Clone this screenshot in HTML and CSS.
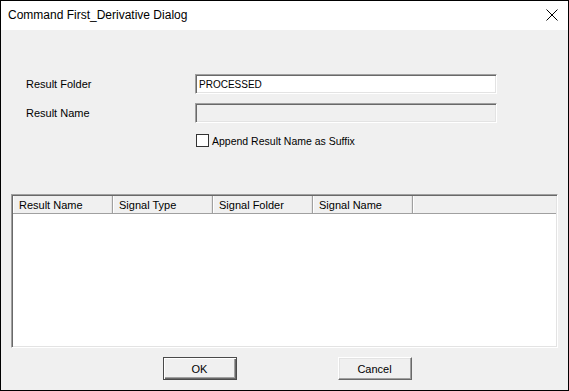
FILE: index.html
```html
<!DOCTYPE html>
<html lang="en">
<head>
  <meta charset="UTF-8" />
  <title>Command First_Derivative Dialog</title>
  <link rel="stylesheet" href="styles.css">
</head>
<body>
  <div class="window">
    <div class="titlebar">
      <span class="title">Command First_Derivative Dialog</span>
      <svg class="close" width="12" height="12" viewBox="0 0 12 12">
        <path d="M0.5 0.5 L11.5 11.5 M11.5 0.5 L0.5 11.5" stroke="#000" stroke-width="1" fill="none" />
      </svg>
    </div>
    <div class="content">
      <div class="form">
        <label>Result Folder</label>
        <div class="field">PROCESSED</div>
        <label>Result Name</label>
        <div class="field disabled"></div>
        <span></span>
        <div class="check"><span class="box"></span>Append Result Name as Suffix</div>
      </div>
      <div class="list">
        <div class="list-head">
          <div class="col">Result Name</div>
          <div class="col">Signal Type</div>
          <div class="col">Signal Folder</div>
          <div class="col">Signal Name</div>
          <div class="col rest"></div>
        </div>
        <div class="list-body"></div>
      </div>
      <div class="buttons">
        <button class="btn default">OK</button>
        <button class="btn">Cancel</button>
      </div>
    </div>
  </div>
</body>
</html>
```

FILE: styles.css
```css
body {
  margin: 0;
  font-family: 'Liberation Sans', Arial, sans-serif;
  font-size: 11px;
  color: #000;
}
.window {
  width: 569px;
  height: 391px;
  box-sizing: border-box;
  border: 1px solid #000;
  background: #f0f0f0;
  display: flex;
  flex-direction: column;
}
.titlebar {
  height: 29px;
  background: #fff;
  display: flex;
  align-items: center;
  justify-content: space-between;
  padding: 0 10px 0 7px;
}
.title {
  font-family: 'Liberation Sans', Arial, sans-serif;
  font-size: 12px;
  margin-top: -1px;
}
.close {
  display: block;
  margin-top: -1px;
}
.content {
  flex: 1;
  display: flex;
  flex-direction: column;
  padding: 44px 10px 0 10px;
}
.form {
  display: grid;
  grid-template-columns: 169px 302px;
  row-gap: 9px;
  padding-left: 15px;
  align-items: center;
}
.field {
  height: 20px;
  box-sizing: border-box;
  background: #fff;
  border: 1px solid;
  border-color: #a0a0a0 #ffffff #ffffff #a0a0a0;
  box-shadow: inset 1px 1px 0 #696969, inset -1px -1px 0 #e3e3e3;
  padding: 3px 3px 0 3px;
  font-size: 10px;
  line-height: 13px;
}
.field.disabled {
  background: #f0f0f0;
}
.check {
  display: flex;
  align-items: center;
  gap: 3px;
  margin-top: 2px;
  padding-left: 1px;
  font-size: 10.5px;
}
.box {
  width: 13px;
  height: 13px;
  box-sizing: border-box;
  background: #fff;
  border: 1px solid #333;
}
.list {
  margin-top: 47px;
  height: 154px;
  box-sizing: border-box;
  background: #fff;
  border: 1px solid;
  border-color: #a0a0a0 #ffffff #ffffff #a0a0a0;
  box-shadow: inset 1px 1px 0 #696969, inset -1px -1px 0 #e3e3e3;
  padding: 1px;
  display: flex;
  flex-direction: column;
}
.list-head {
  display: flex;
  height: 17px;
  background: #f0f0f0;
  border-bottom: 1px solid #a0a0a0;
}
.col {
  width: 100px;
  box-sizing: border-box;
  padding: 3px 0 0 5px;
  line-height: 12px;
  border-left: 1px solid #fff;
  border-right: 1px solid #a0a0a0;
  box-shadow: inset -1px 0 0 #e3e3e3;
}
.col.rest {
  flex: 1;
  border-right: none;
  box-shadow: none;
}
.list-body {
  flex: 1;
}
.buttons {
  display: flex;
  justify-content: center;
  gap: 101px;
  margin-top: 9px;
  padding-left: 5px;
}
.btn {
  width: 74px;
  height: 23px;
  box-sizing: border-box;
  font-family: 'Liberation Sans', Arial, sans-serif;
  font-size: 11px;
  background: #f0f0f0;
  border: 1px solid;
  border-color: #ffffff #696969 #696969 #ffffff;
  box-shadow: inset -1px -1px 0 #a0a0a0, inset 1px 1px 0 #e3e3e3;
  padding: 0;
  color: #000;
}
.btn.default {
  border-color: #4a4a4a;
  box-shadow: inset 1px 1px 0 #ffffff, inset -1px -1px 0 #696969, inset -2px -2px 0 #a0a0a0;
}
```
